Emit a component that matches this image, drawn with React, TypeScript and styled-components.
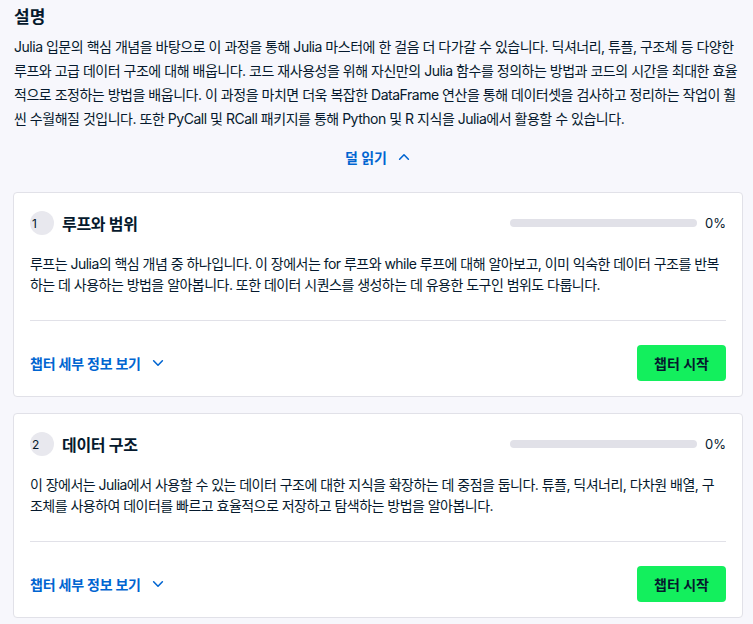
import { createGlobalStyle } from 'styled-components';
import styled from 'styled-components';

const GlobalStyle = createGlobalStyle`
  body {
    margin: 0;
    background-color: #f7f7fc;
    font-family: Inter, 'Noto Sans CJK KR', sans-serif;
    color: #05192d;
  }
`;

const Page = styled.div`
  padding: 4px 10px 8px 13px;
`;

const Heading = styled.h3`
  font-size: 17px;
  font-weight: 700;
  margin: 0 0 5px 1px;
  line-height: 26px;
`;

const Description = styled.p`
  font-size: 14px;
  line-height: 24px;
  margin: 0 0 0 1px;
  letter-spacing: -0.48px;
`;

const Toggle = styled.button`
  display: flex;
  align-items: center;
  gap: 10px;
  margin: 12px auto 21px;
  background: none;
  border: none;
  color: #0065d1;
  font-family: inherit;
  font-weight: 700;
  font-size: 14px;
  padding: 4px 8px;
  cursor: pointer;
`;

const Card = styled.section`
  background: #fff;
  border: 1px solid #e1e1e8;
  border-radius: 4px;
  padding: 16px 16px 15px;
  margin-bottom: 16px;
`;

const CardHeader = styled.div`
  display: flex;
  align-items: center;
  height: 28px;
  margin-bottom: 16px;
`;

const Number = styled.span`
  width: 24px;
  height: 24px;
  border-radius: 50%;
  background: #e8e8ee;
  font-size: 12px;
  display: flex;
  align-items: center;
  padding-left: 2px;
  box-sizing: border-box;
  margin-right: 8px;
`;

const Title = styled.h4`
  flex: 1;
  margin: 0;
  font-size: 16px;
  font-weight: 700;
  letter-spacing: -0.3px;
`;

const Track = styled.div`
  width: 187px;
  height: 8px;
  border-radius: 4px;
  background: #e1e1e8;
  overflow: hidden;
`;

const Fill = styled.div`
  height: 100%;
  background: #03ef62;
`;

const Percent = styled.span`
  font-size: 13px;
  margin-left: 8px;
  color: #05192d;
`;

const Body = styled.p`
  font-size: 14px;
  line-height: 21px;
  margin: 0 0 25px;
  letter-spacing: -0.53px;
`;

const Divider = styled.hr`
  border: none;
  border-top: 1px solid #e1e1e8;
  margin: 0 0 24px;
`;

const Footer = styled.div`
  display: flex;
  align-items: center;
  justify-content: space-between;
`;

const DetailLink = styled.button`
  display: flex;
  align-items: center;
  gap: 10px;
  background: none;
  border: none;
  padding: 0;
  color: #0065d1;
  font-family: inherit;
  font-weight: 700;
  font-size: 14px;
  letter-spacing: -0.2px;
  cursor: pointer;
`;

const StartButton = styled.button`
  background: #13ef5d;
  border: none;
  border-radius: 4px;
  height: 36px;
  width: 89px;
  font-family: inherit;
  font-weight: 700;
  font-size: 14px;
  color: #05192d;
  cursor: pointer;
`;

function Chevron({ up }: { up?: boolean }) {
  return (
    <svg width="14" height="14" viewBox="0 0 16 16" fill="none">
      <path
        d={up ? 'M3 10.5 8 5.5l5 5' : 'M3 5.5l5 5 5-5'}
        stroke="#0065d1"
        strokeWidth="1.8"
        strokeLinecap="round"
        strokeLinejoin="round"
      />
    </svg>
  );
}

const chapters = [
  {
    n: 1,
    title: '루프와 범위',
    progress: 0,
    body: '루프는 Julia의 핵심 개념 중 하나입니다. 이 장에서는 for 루프와 while 루프에 대해 알아보고, 이미 익숙한 데이터 구조를 반복하는 데 사용하는 방법을 알아봅니다. 또한 데이터 시퀀스를 생성하는 데 유용한 도구인 범위도 다룹니다.',
  },
  {
    n: 2,
    title: '데이터 구조',
    progress: 0,
    body: '이 장에서는 Julia에서 사용할 수 있는 데이터 구조에 대한 지식을 확장하는 데 중점을 둡니다. 튜플, 딕셔너리, 다차원 배열, 구조체를 사용하여 데이터를 빠르고 효율적으로 저장하고 탐색하는 방법을 알아봅니다.',
  },
];

function App() {
  return (
    <Page>
      <GlobalStyle />
      <Heading>설명</Heading>
      <Description>
        Julia 입문의 핵심 개념을 바탕으로 이 과정을 통해 Julia 마스터에 한 걸음 더 다가갈 수 있습니다. 딕셔너리, 튜플,
        구조체 등 다양한 루프와 고급 데이터 구조에 대해 배웁니다. 코드 재사용성을 위해 자신만의 Julia 함수를 정의하는
        방법과 코드의 시간을 최대한 효율적으로 조정하는 방법을 배웁니다. 이 과정을 마치면 더욱 복잡한 DataFrame 연산을
        통해 데이터셋을 검사하고 정리하는 작업이 훨씬 수월해질 것입니다. 또한 PyCall 및 RCall 패키지를 통해 Python 및
        R 지식을 Julia에서 활용할 수 있습니다.
      </Description>
      <Toggle>
        덜 읽기 <Chevron up />
      </Toggle>
      {chapters.map((c) => (
        <Card key={c.n}>
          <CardHeader>
            <Number>{c.n}</Number>
            <Title>{c.title}</Title>
            <Track>
              <Fill style={{ width: `${c.progress}%` }} />
            </Track>
            <Percent>{c.progress}%</Percent>
          </CardHeader>
          <Body>{c.body}</Body>
          <Divider />
          <Footer>
            <DetailLink>
              챕터 세부 정보 보기 <Chevron />
            </DetailLink>
            <StartButton>챕터 시작</StartButton>
          </Footer>
        </Card>
      ))}
    </Page>
  );
}

export default App;
